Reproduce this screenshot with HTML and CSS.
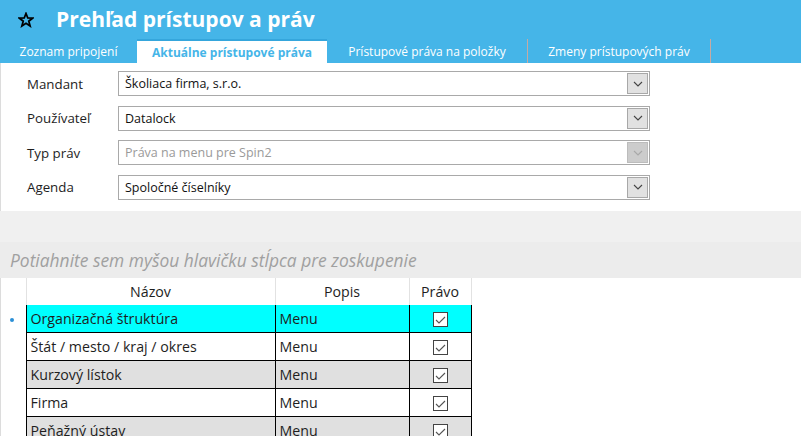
FILE: index.html
```html
<!DOCTYPE html>
<html lang="sk">
<head>
<meta charset="utf-8">
<title>Prehľad prístupov a práv</title>
<link rel="stylesheet" href="styles.css">
</head>
<body>
<header class="hdr">
  <div class="title-row">
    <svg class="star" width="16" height="16" viewBox="0 0 16 16" aria-hidden="true">
      <polygon points="8,1.5 9.8,6 14.5,6.2 10.8,9.2 12.1,14 8,11.3 3.9,14 5.2,9.2 1.5,6.2 6.2,6" fill="none" stroke="#000" stroke-width="1.8" stroke-linejoin="miter"/>
    </svg>
    <h1 class="title">Prehľad prístupov a práv</h1>
  </div>
  <nav class="tabs">
    <div class="tab tab-1">Zoznam pripojení</div>
    <div class="tab tab-2 active">Aktuálne prístupové práva</div>
    <div class="tab tab-3 sep">Prístupové práva na položky</div>
    <div class="tab tab-4 sep">Zmeny prístupových práv</div>
  </nav>
</header>

<section class="form">
  <div class="frow">
    <label class="flabel">Mandant</label>
    <div class="combo"><span class="cval">Školiaca firma, s.r.o.</span><span class="cbtn"><svg width="10" height="6" viewBox="0 0 10 6"><polyline points="1,1 5,5 9,1" fill="none" stroke="#444" stroke-width="1.1"/></svg></span></div>
  </div>
  <div class="frow">
    <label class="flabel">Používateľ</label>
    <div class="combo"><span class="cval">Datalock</span><span class="cbtn"><svg width="10" height="6" viewBox="0 0 10 6"><polyline points="1,1 5,5 9,1" fill="none" stroke="#444" stroke-width="1.1"/></svg></span></div>
  </div>
  <div class="frow">
    <label class="flabel">Typ práv</label>
    <div class="combo disabled"><span class="cval">Práva na menu pre Spin2</span><span class="cbtn"><svg width="10" height="6" viewBox="0 0 10 6"><polyline points="1,1 5,5 9,1" fill="none" stroke="#a8a8a8" stroke-width="1.1"/></svg></span></div>
  </div>
  <div class="frow">
    <label class="flabel">Agenda</label>
    <div class="combo"><span class="cval">Spoločné číselníky</span><span class="cbtn"><svg width="10" height="6" viewBox="0 0 10 6"><polyline points="1,1 5,5 9,1" fill="none" stroke="#444" stroke-width="1.1"/></svg></span></div>
  </div>
</section>

<div class="splitter"></div>
<div class="group-panel">Potiahnite sem myšou hlavičku stĺpca pre zoskupenie</div>

<div class="grid">
  <table class="gtable">
    <colgroup>
      <col class="c-ind"><col class="c-name"><col class="c-desc"><col class="c-right">
    </colgroup>
    <thead>
      <tr>
        <th class="ind"></th><th>Názov</th><th>Popis</th><th>Právo</th>
      </tr>
    </thead>
    <tbody>
      <tr class="sel">
        <td class="ind"><span class="dot"></span></td><td>Organizačná štruktúra</td><td>Menu</td><td class="chk"><span class="cb"><svg width="11" height="8" viewBox="0 0 11 8"><polyline points="1,4 4,7 10,1" fill="none" stroke="#555" stroke-width="1.1"/></svg></span></td>
      </tr>
      <tr>
        <td class="ind"></td><td>Štát / mesto / kraj / okres</td><td>Menu</td><td class="chk"><span class="cb"><svg width="11" height="8" viewBox="0 0 11 8"><polyline points="1,4 4,7 10,1" fill="none" stroke="#555" stroke-width="1.1"/></svg></span></td>
      </tr>
      <tr class="alt">
        <td class="ind"></td><td>Kurzový lístok</td><td>Menu</td><td class="chk"><span class="cb"><svg width="11" height="8" viewBox="0 0 11 8"><polyline points="1,4 4,7 10,1" fill="none" stroke="#555" stroke-width="1.1"/></svg></span></td>
      </tr>
      <tr>
        <td class="ind"></td><td>Firma</td><td>Menu</td><td class="chk"><span class="cb"><svg width="11" height="8" viewBox="0 0 11 8"><polyline points="1,4 4,7 10,1" fill="none" stroke="#555" stroke-width="1.1"/></svg></span></td>
      </tr>
      <tr class="alt">
        <td class="ind"></td><td>Peňažný ústav</td><td>Menu</td><td class="chk"><span class="cb"><svg width="11" height="8" viewBox="0 0 11 8"><polyline points="1,4 4,7 10,1" fill="none" stroke="#555" stroke-width="1.1"/></svg></span></td>
      </tr>
    </tbody>
  </table>
</div>
</body>
</html>
```

FILE: styles.css
```css
html, body {
  margin: 0;
  padding: 0;
  background: #ffffff;
  overflow: hidden;
}
body {
  width: 801px;
  height: 436px;
  font-family: "Open Sans", "Noto Sans", sans-serif;
  color: #1e1e1e;
}

/* Header */
.hdr {
  background: #45b5e8;
  height: 63px;
  display: flex;
  flex-direction: column;
}
.title-row {
  height: 39px;
  display: flex;
  align-items: center;
}
.star {
  margin-left: 18px;
  margin-right: 22px;
}
.title {
  margin: 0;
  font-size: 21px;
  font-weight: 700;
  color: #ffffff;
  line-height: 1;
}
.tabs {
  height: 24px;
  display: flex;
  align-items: stretch;
}
.tab {
  display: flex;
  align-items: center;
  justify-content: center;
  font-size: 12px;
  color: #ffffff;
  box-sizing: border-box;
}
.tab-1 { width: 137px; }
.tab-2 { width: 190px; }
.tab-3 { width: 201px; }
.tab-4 { width: 183px; }
.tab.sep {
  border-right: 1px solid #c5aaa3;
}
.tab.active {
  background: #ffffff;
  color: #45b5e8;
  font-weight: 700;
  border-top: 2px solid #35a6dc;
}

/* Form */
.form {
  padding: 8px 0 11px 0;
  display: flex;
  flex-direction: column;
  gap: 9.6px;
  border-left: 1px solid #dcdcdc;
}
.frow {
  display: flex;
  align-items: center;
  height: 25px;
}
.flabel {
  width: 91px;
  padding-left: 26px;
  font-size: 13.3px;
  color: #1e1e1e;
}
.combo {
  width: 532px;
  height: 25px;
  box-sizing: border-box;
  border: 1px solid #a9a9a9;
  display: flex;
  align-items: center;
  justify-content: space-between;
  background: #fff;
}
.cval {
  padding-left: 6px;
  font-size: 12.5px;
  color: #111;
}
.cbtn {
  width: 21px;
  height: 21px;
  box-sizing: border-box;
  margin-right: 1px;
  background: #e1e1e1;
  border: 1px solid #a8a8a8;
  display: flex;
  align-items: center;
  justify-content: center;
}
.combo.disabled .cval { color: #9a9a9a; }
.combo.disabled .cbtn { background: #cccccc; border-color: #bcbcbc; }

/* Splitter + group panel */
.splitter {
  height: 31px;
  background: #f0f0f0;
}
.group-panel {
  height: 36px;
  background: #ececec;
  box-sizing: border-box;
  padding: 6px 0 0 10px;
  font-size: 17.4px;
  font-style: italic;
  color: #a0a0a0;
}

/* Grid */
.grid {
  border-left: 1px solid #dcdcdc;
}
.gtable {
  border-collapse: collapse;
  table-layout: fixed;
  width: 470px;
  font-size: 14.2px;
}
.c-ind { width: 25px; }
.c-name { width: 249px; }
.c-desc { width: 134px; }
.c-right { width: 62px; }
.gtable th {
  height: 27px;
  font-weight: 400;
  color: #1e1e1e;
  border-left: 1px solid #e2e2e2;
  border-right: 1px solid #e2e2e2;
  padding: 0;
  text-align: center;
}
.gtable th.ind { border-left: none; }
.gtable td {
  height: 27px;
  padding: 0 0 0 4px;
  border: 1px solid #000;
  white-space: nowrap;
  overflow: hidden;
}
.gtable tbody tr:first-child td { border-top: none; }
.gtable td.ind {
  border: none;
  border-right: 1px solid #000;
  padding: 0;
  text-align: center;
  background: #fff;
}
.gtable tr.sel td { background: #00ffff; }
.gtable tr.sel td.ind { background: #fff; }
.gtable tr.alt td { background: #e0e0e0; }
.gtable tr.alt td.ind { background: #fff; }
.dot {
  display: inline-block;
  width: 4px;
  height: 4px;
  border-radius: 50%;
  background: #2b8fd6;
  vertical-align: middle;
  margin-left: -2px;
}
.gtable td.chk {
  padding: 0;
  text-align: center;
}
.cb {
  display: inline-flex;
  width: 15px;
  height: 15px;
  box-sizing: border-box;
  border: 1px solid #444;
  background: #fff;
  align-items: center;
  justify-content: center;
  vertical-align: middle;
}
```
